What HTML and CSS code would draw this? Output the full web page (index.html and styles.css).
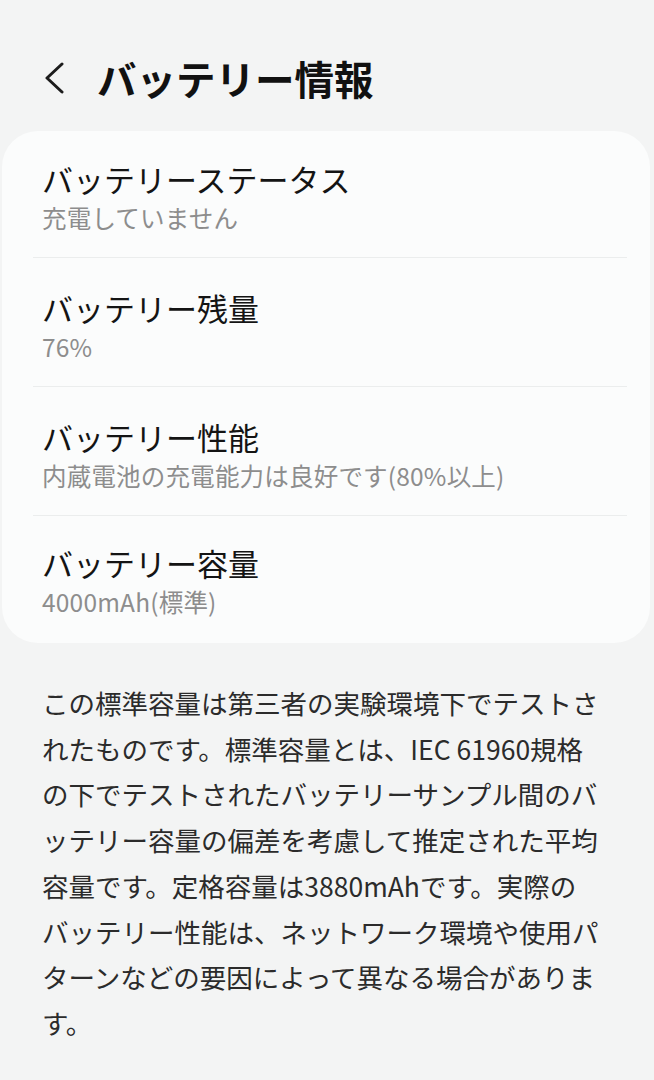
FILE: index.html
```html
<!DOCTYPE html>
<html lang="ja">
<head>
    <meta charset="UTF-8">
    <meta name="viewport" content="width=device-width, initial-scale=1.0">
    <title>バッテリー情報</title>
    <link rel="stylesheet" href="styles.css">
</head>
<body>
    <header class="top-bar">
        <a href="#" class="back-button" aria-label="戻る">
            <svg width="20" height="32" viewBox="0 0 20 32">
                <polyline points="18,2 3,16 18,30" fill="none" stroke="#1c1c1c" stroke-width="3" stroke-linecap="round" stroke-linejoin="round"/>
            </svg>
        </a>
        <h1>バッテリー情報</h1>
    </header>

    <section class="card">
        <div class="row">
            <p class="row-title">バッテリーステータス</p>
            <p class="row-value">充電していません</p>
        </div>
        <div class="row">
            <p class="row-title">バッテリー残量</p>
            <p class="row-value">76%</p>
        </div>
        <div class="row">
            <p class="row-title">バッテリー性能</p>
            <p class="row-value">内蔵電池の充電能力は良好です(80%以上)</p>
        </div>
        <div class="row">
            <p class="row-title">バッテリー容量</p>
            <p class="row-value">4000mAh(標準)</p>
        </div>
    </section>

    <p class="note">この標準容量は第三者の実験環境下でテストさ<br>れたものです。標準容量とは、IEC 61960規格<br>の下でテストされたバッテリーサンプル間のバ<br>ッテリー容量の偏差を考慮して推定された平均<br>容量です。定格容量は3880mAhです。実際の<br>バッテリー性能は、ネットワーク環境や使用パ<br>ターンなどの要因によって異なる場合がありま<br>す。</p>
</body>
</html>
```

FILE: styles.css
```css
:root {
    --bg-color: #f3f4f4;
    --card-bg: #fbfcfc;
    --text-color: #141414;
    --sub-color: #8d8d8d;
    --line-color: #ebeded;
}

body {
    font-family: "Noto Sans CJK JP", "Noto Sans", sans-serif;
    background-color: var(--bg-color);
    color: var(--text-color);
    margin: 0;
    padding: 0;
}

.top-bar {
    display: flex;
    align-items: center;
    gap: 33px;
    height: 44px;
    padding: 56px 0 31px 44px;
}

.back-button {
    display: flex;
    text-decoration: none;
}

.top-bar h1 {
    margin: 0;
    font-size: 39.5px;
    font-weight: 700;
    line-height: 44px;
    color: #111;
}

.card {
    background-color: var(--card-bg);
    border-radius: 36px;
    margin: 0 4px 0 2px;
    padding: 0 23px 0 31px;
}

.row {
    padding: 28px 0 22px 9px;
    height: 78px;
}

.row:first-child {
    padding-top: 26px;
}

.row + .row {
    border-top: 1.5px solid var(--line-color);
}

.row:last-child {
    padding-top: 25px;
    padding-bottom: 24px;
}

.row-title {
    margin: 0;
    font-size: 31px;
    line-height: 44px;
    color: var(--text-color);
}

.row-value {
    margin: 0;
    font-size: 24.5px;
    line-height: 34px;
    color: var(--sub-color);
    letter-spacing: 0.2px;
}

.note {
    margin: 37px 0 0;
    padding: 0 0 0 42px;
    font-size: 26.5px;
    line-height: 45.7px;
    color: #2b2b2b;
    white-space: nowrap;
}
```
